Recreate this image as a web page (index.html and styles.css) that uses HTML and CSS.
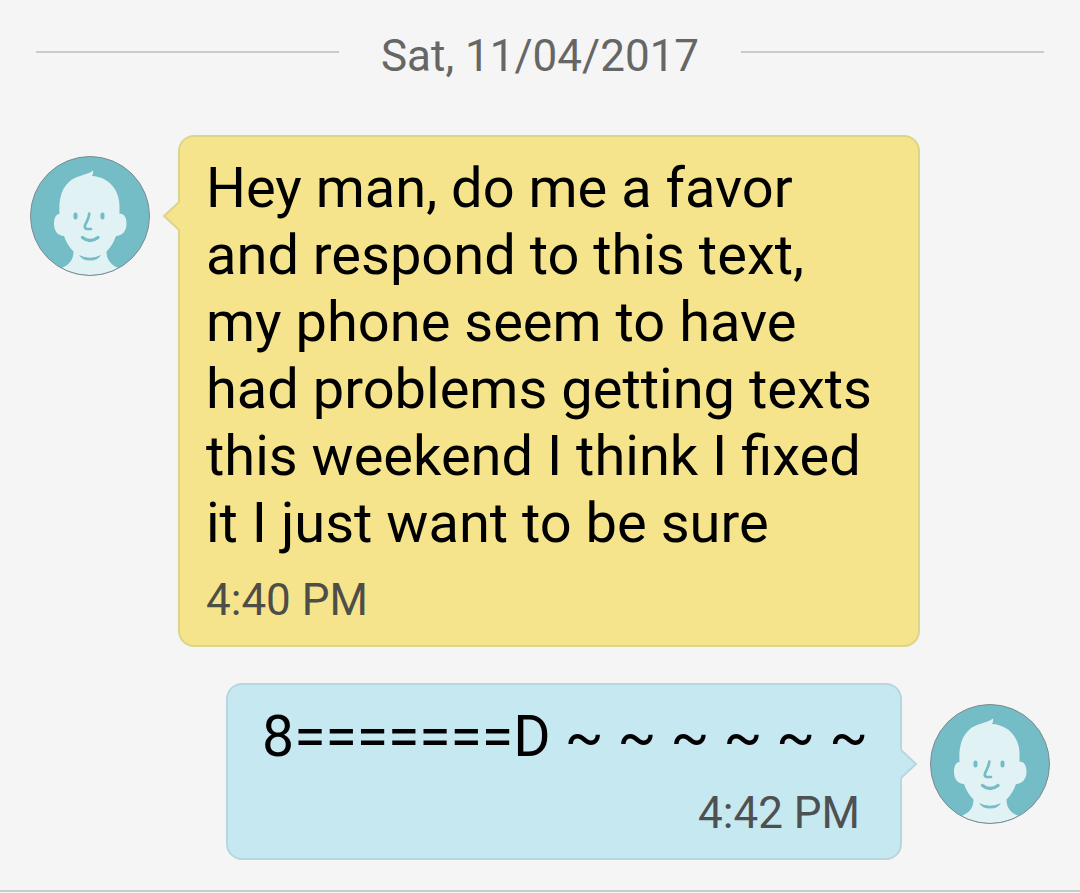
FILE: index.html
```html
<!DOCTYPE html>
<html lang="en">
<head>
<meta charset="utf-8">
<meta name="viewport" content="width=device-width, initial-scale=1">
<title>Messages</title>
<link rel="stylesheet" href="styles.css">
</head>
<body>
<svg class="sprite" aria-hidden="true">
  <defs>
    <clipPath id="disc"><circle cx="60" cy="60" r="59"/></clipPath>
    <symbol id="person" viewBox="0 0 120 120">
      <circle cx="60" cy="60" r="59.5" fill="#75bdc6"/>
      <g clip-path="url(#disc)">
        <path fill="#e1f2f5" d="M29.500 58C28.500 43 32 32 39 26C45 19.500 57 19.500 63 14.500Q63.500 17.500 62 20C79 21 89.500 34 89.500 50V58C94 57 96.700 62 96.500 68C96.500 75 92 80 86 80C84 86 81 91 76.500 95.500C76.500 104 81 109 88.500 112L98 117V122H22V117L31.500 112C39 109 43.500 104 43.500 95.500C39 91 36 86 34 80C28 80 24 75 24 68C24 62 26 58 29.500 58Z"/>
        <path fill="#75bdc6" d="M49 99Q60 104.500 71 99Q68 104.500 60 104.500T49 99Z"/>
      </g>
      <rect x="43.500" y="56.500" width="4" height="7" rx="2" fill="#75bdc6"/>
      <rect x="70.500" y="56.500" width="4" height="7" rx="2" fill="#75bdc6"/>
      <path fill="none" stroke="#75bdc6" stroke-width="2.700" stroke-linecap="round" stroke-linejoin="round" d="M59.300 57.500C59 63 56 66 55 69.500Q54 73 57.500 73H61"/>
      <path fill="none" stroke="#75bdc6" stroke-width="3.400" stroke-linecap="round" d="M52.500 81.500Q60 87.500 68 81.500"/>
      <circle cx="60" cy="60" r="59.500" fill="none" stroke="#7d8b90" stroke-width="1"/>
    </symbol>
  </defs>
</svg>
<main class="thread">
  <div class="day">
    <span class="day-rule"></span>
    <time class="day-label" datetime="2017-11-04">Sat, 11/04/2017</time>
    <span class="day-rule"></span>
  </div>
  <article class="message received">
    <svg class="avatar" role="img" aria-label="Contact"><use href="#person"/></svg>
    <div class="bubble">
      <svg class="tail" viewBox="0 0 18 30" aria-hidden="true"><path class="tail-fill" d="M18 1L16 2L2 15L16 28L18 29Z"/><path class="tail-edge" d="M17 1L2 15L17 29"/></svg>
      <p class="text">Hey man, do me a favor and respond to this text, my phone seem to have had problems getting texts this weekend I think I fixed it I just want to be sure</p>
      <time class="stamp" datetime="2017-11-04T16:40">4:40 PM</time>
    </div>
  </article>
  <article class="message sent">
    <div class="bubble">
      <svg class="tail" viewBox="0 0 18 30" aria-hidden="true"><path class="tail-fill" d="M0 1L2 2L16 15L2 28L0 29Z"/><path class="tail-edge" d="M1 1L16 15L1 29"/></svg>
      <p class="text">8=======D ~ ~ ~ ~ ~ ~</p>
      <time class="stamp" datetime="2017-11-04T16:42">4:42 PM</time>
    </div>
    <svg class="avatar" role="img" aria-label="Me"><use href="#person"/></svg>
  </article>
</main>
</body>
</html>
```
FILE: styles.css
```css
* {
  box-sizing: border-box;
}

body {
  margin: 0;
  background: #f5f5f5;
  font-family: Roboto, "Liberation Sans", sans-serif;
  color: #000;
}

.sprite {
  position: absolute;
  width: 0;
  height: 0;
}

.thread {
  display: flex;
  flex-direction: column;
  padding: 30px 30px 30px;
  border-bottom: 2px solid #cacaca;
}

.day {
  display: flex;
  gap: 42px;
  padding: 0 6px;
  margin-bottom: 52px;
}

.day-rule {
  flex: 1;
  height: 2px;
  margin-top: 21px;
  background: #cbcbcb;
}

.day-label,
.stamp {
  font-size: 44px;
  line-height: 53px;
}

.day-label {
  color: #666;
}

.message {
  display: flex;
  align-items: flex-start;
  gap: 28px;
}

.received {
  padding-right: 130px;
  margin-bottom: 36px;
}

.sent {
  justify-content: flex-end;
}

.avatar {
  flex: none;
  width: 120px;
  height: 120px;
  margin-top: 21px;
}

.bubble {
  position: relative;
  display: flex;
  flex-direction: column;
  gap: 17px;
  padding: 18px 26px;
  border: 2px solid;
  border-radius: 16px;
}

.received .bubble {
  flex: 1;
  background: #f5e48b;
  border-color: #ddd48c;
}

.sent .bubble {
  padding: 18px 32px 18px 34px;
  background: #c6e8f0;
  border-color: #b8d6df;
}

.text {
  margin: 0;
  font-size: 56px;
  line-height: 67px;
}

.sent .text {
  font-size: 57px;
}

.stamp {
  color: #4f4d47;
}

.sent .stamp {
  align-self: flex-end;
  padding-right: 8px;
  color: #4d5152;
}

.tail {
  position: absolute;
  top: 64px;
  width: 18px;
  height: 30px;
}

.received .tail {
  right: 100%;
}

.sent .tail {
  left: 100%;
}

.tail-edge {
  fill: none;
  stroke-width: 2;
}

.received .tail-fill {
  fill: #f5e48b;
}

.received .tail-edge {
  stroke: #ddd48c;
}

.sent .tail-fill {
  fill: #c6e8f0;
}

.sent .tail-edge {
  stroke: #b8d6df;
}
```
